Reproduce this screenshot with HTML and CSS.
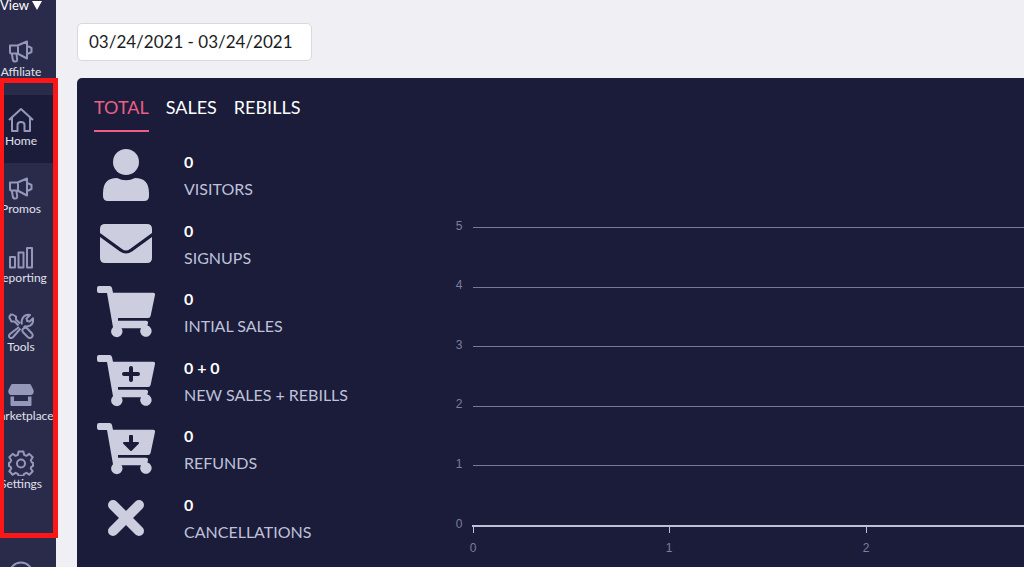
FILE: index.html
```html
<!DOCTYPE html>
<html lang="en">
<head>
<meta charset="utf-8">
<meta name="viewport" content="width=device-width, initial-scale=1">
<title>Dashboard</title>
<link rel="stylesheet" href="styles.css">
</head>
<body>
<svg class="defs" aria-hidden="true">
  <symbol id="horn" viewBox="0 0 26 26"><path d="M2 7.500h7.500L19 3.500v17L9.500 15.500H3Q2 15.500 2 14zM10 7.500v8M3.800 15.500l1 6q.3 2 2.400 2 2.300 0 1.900-2.500l-.6-5M19 8.500h1.500l3 1.500v4l-3 1.500H19"/></symbol>
  <symbol id="cart" viewBox="0 0 58 52"><path d="M2 0h10.500q2 0 2.500 2l1 4.700h40q2.400 0 2 2.400l-4.400 20.900q-.5 2-2.400 2H21v2.800h28q2.400 0 2 2.300l-.6 2.500A5.700 5.700 0 1 1 44 42.200H24.500A5.700 5.700 0 1 1 16 41.200L10 7H2Q0 7 0 5V2Q0 0 2 0z"/></symbol>
</svg>
<div class="app">
  <aside class="sidebar">
    <button class="view" type="button">View <svg class="caret" viewBox="0 0 10 9"><path d="M0 0h10L5 9z"/></svg></button>
    <nav class="nav">
      <a class="item" href="#"><svg class="icon"><use href="#horn"/></svg>Affiliate</a>
      <a class="item active" href="#"><svg class="icon" viewBox="0 0 26 26"><path d="M1 13 13 2l12 11M4 11v13h5.500v-6q0-3 3.500-3t3.500 3v6H22V11"/></svg>Home</a>
      <a class="item" href="#"><svg class="icon"><use href="#horn"/></svg>Promos</a>
      <a class="item" href="#"><svg class="icon" viewBox="0 0 26 26"><path d="M2 13h5v10.500H2zM10.500 8.500h5v15h-5zM19 4h5v19.500h-5z"/></svg>Reporting</a>
      <a class="item" href="#"><svg class="icon" viewBox="0 0 26 26"><path d="M3.500 1 8 3.500v3l4 4M1 4l2.500 4.500h3l4 4M15.500 15.500q2-1.500 4 .3l4.500 4.700q1.500 2-.2 3.700-2 1.500-3.800 0l-4.700-4.700q-1.800-2-.3-3.700zM3.500 1 1 4M11 14l-9 7q-1.800 1.800-.4 3.400 1.800 1.500 3.600-.4l7.300-8.500M14 11.500q-1-3 .5-6Q17 1 22 2l-3.500 3.500.6 2.500 2.500.6L25 5.200q1 5-3 7.500-3 1.300-5 .5l-1.500 1.500"/></svg>Tools</a>
      <a class="item" href="#"><svg class="icon solid" viewBox="0 0 26 26"><path d="M4.500 2h17q1 0 1.500 1l2.500 5q1 4-2.200 5H2.700Q-.5 12 .5 8L3 3q.5-1 1.500-1zM2.500 14.500H6V19h14v-4.500h3.500V23q0 1-1 1h-19q-1 0-1-1z"/></svg>Marketplace</a>
      <a class="item" href="#"><svg class="icon" viewBox="0 0 26 26"><path d="m10.600 1.500h4.800l.7 3.300 2.300 1 2.900-1.900 3.400 3.400-1.900 2.900 1 2.200 1.200.6v3l-1.700.9-.6 1.600 2 2.800-3.400 3.400-2.900-1.900-2.300 1-.7 2h-4.800l-.7-2-2.300-1-2.900 1.900-3.400-3.400 2-2.800-.6-1.600-1.700-.9v-3l1.200-.6 1-2.200-1.900-2.900 3.400-3.400 2.900 1.900 2.300-1z"/><circle cx="13" cy="13.500" r="4"/></svg>Settings</a>
    </nav>
    <svg class="icon foot" viewBox="0 0 26 26"><circle cx="13" cy="13" r="11.500"/></svg>
    <div class="highlight"></div>
  </aside>
  <main class="main">
    <input class="dates" type="text" aria-label="Date range" value="03/24/2021 - 03/24/2021">
    <section class="panel">
      <div class="tabs">
        <button class="tab current" type="button">TOTAL</button>
        <button class="tab" type="button">SALES</button>
        <button class="tab" type="button">REBILLS</button>
      </div>
      <div class="content">
        <ul class="stats">
          <li class="stat"><svg class="pic" viewBox="0 0 58 52"><circle cx="29" cy="13" r="13"/><path d="M20 29q9 4.500 18 0 14 0 14 15v3q0 5-5 5H11q-5 0-5-5v-3Q6 29 20 29z"/></svg><div><strong class="value">0</strong><span class="name">VISITORS</span></div></li>
          <li class="stat"><svg class="pic" viewBox="0 0 58 52"><path d="M8 6h42q5 0 5 5v4L33 31q-4 3-8 0L3 15V11q0-5 5-5zM3 19l20 14.500q6 4 12 0L55 19v21q0 5-5 5H8q-5 0-5-5z"/></svg><div><strong class="value">0</strong><span class="name">SIGNUPS</span></div></li>
          <li class="stat"><svg class="pic"><use href="#cart"/></svg><div><strong class="value">0</strong><span class="name">INTIAL SALES</span></div></li>
          <li class="stat"><svg class="pic" viewBox="0 0 58 52"><use href="#cart"/><path class="mark" d="M34 13v12M27 19h14"/></svg><div><strong class="value">0 + 0</strong><span class="name">NEW SALES + REBILLS</span></div></li>
          <li class="stat"><svg class="pic" viewBox="0 0 58 52"><use href="#cart"/><path class="mark thin" d="M33 13h2v7h6l-7 7-7-7h6z"/></svg><div><strong class="value">0</strong><span class="name">REFUNDS</span></div></li>
          <li class="stat"><svg class="pic" viewBox="0 0 58 52"><path class="cross" d="m16 13 26 26M42 13 16 39"/></svg><div><strong class="value">0</strong><span class="name">CANCELLATIONS</span></div></li>
        </ul>
        <svg class="chart" role="img" aria-label="Totals chart">
          <g class="grid">
            <line x1="23" x2="100%" y1="86" y2="86"/><line x1="23" x2="100%" y1="146" y2="146"/><line x1="23" x2="100%" y1="205" y2="205"/><line x1="23" x2="100%" y1="265" y2="265"/><line x1="23" x2="100%" y1="324" y2="324"/>
          </g>
          <g class="axis"><line x1="22" x2="100%" y1="385" y2="385"/><path class="tick" d="M23 384v8M219 384v8M416 384v8"/></g>
          <g class="labels">
            <text x="9" y="89">5</text><text x="9" y="148">4</text><text x="9" y="208">3</text><text x="9" y="267">2</text><text x="9" y="327">1</text><text x="9" y="387">0</text>
            <text x="23" y="411">0</text><text x="219" y="411">1</text><text x="416" y="411">2</text>
          </g>
        </svg>
      </div>
    </section>
  </main>
</div>
</body>
</html>
```
FILE: styles.css
```css
* { box-sizing: border-box; }
body {
  margin: 0;
  background: #fff;
  font-family: Lato, "Noto Sans", sans-serif;
  overflow: hidden;
}
button { border: 0; padding: 0; background: none; font: inherit; color: inherit; }
.defs { position: absolute; width: 0; height: 0; }
.app {
  display: flex;
  height: calc(100vh - 9px);
  margin-left: -14px;
  background: #f0eff4;
  overflow: hidden;
}
.sidebar {
  position: relative;
  flex: 0 0 70px;
  display: flex;
  flex-direction: column;
  align-items: center;
  background: #2a2b4b;
  color: #e0e1ed;
  font-size: 12px;
}
.view {
  display: flex;
  gap: 3px;
  align-items: center;
  flex: 0 0 26px;
  padding-bottom: 16px;
  line-height: 10px;
  font-size: 13px;
  color: #fff;
}
.caret { width: 10px; height: 9px; fill: #fff; }
.nav {
  flex: 0 0 481px;
  align-self: stretch;
  display: grid;
  grid-auto-rows: 1fr;
}
.item {
  display: flex;
  flex-direction: column;
  align-items: center;
  padding-top: 12px;
  line-height: 16px;
  color: inherit;
  text-decoration: none;
}
.active { background: #1a1c3a; }
.icon {
  flex: none;
  width: 26px;
  height: 26px;
  fill: none;
  stroke: #9698ba;
  stroke-width: 2;
  stroke-linejoin: round;
}
.solid { fill: #9698ba; stroke: none; }
.foot { margin-top: 54px; }
.highlight {
  position: absolute;
  top: 78px;
  left: 13px;
  width: 59px;
  height: 460px;
  border: 5px solid #fb1717;
  z-index: 1;
}
.main {
  flex: 1;
  min-width: 0;
  display: flex;
  flex-direction: column;
  align-items: flex-start;
  gap: 17px;
  padding: 23px 0 0 21px;
}
.dates {
  flex: none;
  width: 235px;
  height: 38px;
  padding: 0 11px 2px;
  border: 1px solid #d9d8de;
  border-radius: 5px;
  background: #fff;
  color: #1c1c1e;
  font: 17px Lato, "Noto Sans", sans-serif;
}
.panel {
  flex: 1;
  align-self: stretch;
  padding: 17px 0 0 17px;
  border-top-left-radius: 5px;
  background: #1a1c3a;
  color: #fff;
}
.tabs { display: flex; gap: 17px; }
.tab {
  height: 37px;
  padding-bottom: 10px;
  border-bottom: 2px solid transparent;
  font-size: 18px;
  line-height: 25px;
}
.current { color: #ea5f86; border-color: #ea5f86; }
.content { display: flex; gap: 16px; padding-top: 9px; }
.stats {
  flex: 0 0 340px;
  display: grid;
  grid-auto-rows: 1fr;
  height: 411px;
  margin: 0;
  padding: 0;
  list-style: none;
}
.stat { display: flex; align-items: center; gap: 29px; padding-left: 3px; }
.pic { flex: none; width: 58px; height: 52px; fill: #cccee0; }
.mark { fill: #1a1c3a; stroke: #1a1c3a; stroke-width: 4; stroke-linecap: round; stroke-linejoin: round; }
.thin { stroke-width: 2; }
.cross { stroke: #cccee0; stroke-width: 10; stroke-linecap: round; }
.value, .name { display: block; line-height: 27px; font-size: 16px; }
.name { color: #bfc1d8; }
.chart { flex: 1; min-width: 0; height: 426px; }
.grid { stroke: #777996; stroke-width: 1; shape-rendering: crispEdges; }
.axis { stroke: #bfc0d6; stroke-width: 2; shape-rendering: crispEdges; fill: none; }
.tick { stroke-width: 1; }
.labels {
  fill: #7c7e9c;
  font: 12px "Liberation Sans", sans-serif;
  text-anchor: middle;
}
```
